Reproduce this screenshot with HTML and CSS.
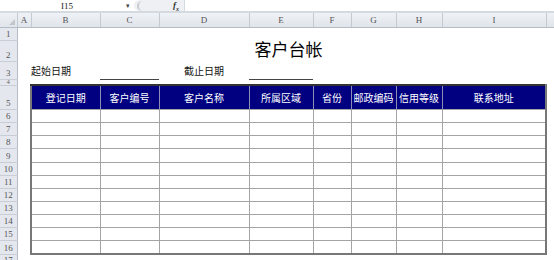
FILE: index.html
```html
<!DOCTYPE html>
<html lang="zh-CN">
<head>
    <meta charset="UTF-8">
    <title>客户台帐</title>
    <link rel="stylesheet" href="styles.css">
</head>
<body>
    <div class="formula-bar">
        <div class="name-box">
            <span class="cell-ref">I15</span>
            <span class="drop">&#9662;</span>
        </div>
        <div class="fx-zone">
            <span class="grip"></span>
            <span class="fx">f<sub>x</sub></span>
        </div>
        <div class="formula-input"></div>
    </div>

    <table class="sheet">
        <colgroup>
            <col style="width:17px"><col style="width:14px"><col style="width:69px">
            <col style="width:59px"><col style="width:90px"><col style="width:64px">
            <col style="width:38px"><col style="width:45px"><col style="width:46px">
            <col style="width:104px"><col style="width:8px">
        </colgroup>
        <tr class="col-head">
            <th class="corner"><span class="tri"></span></th>
            <th>A</th><th>B</th><th>C</th><th>D</th><th>E</th>
            <th>F</th><th>G</th><th>H</th><th>I</th><th></th>
        </tr>
        <tr class="r1"><th class="rh">1</th><td colspan="10"></td></tr>
        <tr class="r2">
            <th class="rh">2</th><td></td>
            <td colspan="8" class="title">客户台帐</td><td></td>
        </tr>
        <tr class="r3">
            <th class="rh">3</th><td></td>
            <td class="label">起始日期</td>
            <td class="blank"></td>
            <td class="label center">截止日期</td>
            <td class="blank"></td>
            <td colspan="5"></td>
        </tr>
        <tr class="r4"><th class="rh">4</th><td colspan="10"></td></tr>
        <tr class="r5">
            <th class="rh">5</th><td></td>
            <td class="hd first">登记日期</td>
            <td class="hd">客户编号</td>
            <td class="hd">客户名称</td>
            <td class="hd">所属区域</td>
            <td class="hd">省份</td>
            <td class="hd">邮政编码</td>
            <td class="hd">信用等级</td>
            <td class="hd last">联系地址</td>
            <td></td>
        </tr>
        <tr class="row"><th class="rh">6</th><td></td><td class="c first"></td><td class="c"></td><td class="c"></td><td class="c"></td><td class="c"></td><td class="c"></td><td class="c"></td><td class="c last"></td><td></td></tr>
        <tr class="row"><th class="rh">7</th><td></td><td class="c first"></td><td class="c"></td><td class="c"></td><td class="c"></td><td class="c"></td><td class="c"></td><td class="c"></td><td class="c last"></td><td></td></tr>
        <tr class="row"><th class="rh">8</th><td></td><td class="c first"></td><td class="c"></td><td class="c"></td><td class="c"></td><td class="c"></td><td class="c"></td><td class="c"></td><td class="c last"></td><td></td></tr>
        <tr class="row tall"><th class="rh">9</th><td></td><td class="c first"></td><td class="c"></td><td class="c"></td><td class="c"></td><td class="c"></td><td class="c"></td><td class="c"></td><td class="c last"></td><td></td></tr>
        <tr class="row"><th class="rh">10</th><td></td><td class="c first"></td><td class="c"></td><td class="c"></td><td class="c"></td><td class="c"></td><td class="c"></td><td class="c"></td><td class="c last"></td><td></td></tr>
        <tr class="row"><th class="rh">11</th><td></td><td class="c first"></td><td class="c"></td><td class="c"></td><td class="c"></td><td class="c"></td><td class="c"></td><td class="c"></td><td class="c last"></td><td></td></tr>
        <tr class="row"><th class="rh">12</th><td></td><td class="c first"></td><td class="c"></td><td class="c"></td><td class="c"></td><td class="c"></td><td class="c"></td><td class="c"></td><td class="c last"></td><td></td></tr>
        <tr class="row"><th class="rh">13</th><td></td><td class="c first"></td><td class="c"></td><td class="c"></td><td class="c"></td><td class="c"></td><td class="c"></td><td class="c"></td><td class="c last"></td><td></td></tr>
        <tr class="row"><th class="rh">14</th><td></td><td class="c first"></td><td class="c"></td><td class="c"></td><td class="c"></td><td class="c"></td><td class="c"></td><td class="c"></td><td class="c last"></td><td></td></tr>
        <tr class="row"><th class="rh">15</th><td></td><td class="c first"></td><td class="c"></td><td class="c"></td><td class="c"></td><td class="c"></td><td class="c"></td><td class="c"></td><td class="c last"></td><td></td></tr>
        <tr class="row tall bottom"><th class="rh">16</th><td></td><td class="c first"></td><td class="c"></td><td class="c"></td><td class="c"></td><td class="c"></td><td class="c"></td><td class="c"></td><td class="c last"></td><td></td></tr>
        <tr class="r17"><th class="rh">17</th><td colspan="10"></td></tr>
    </table>
</body>
</html>
```

FILE: styles.css
```css
* {
    margin: 0;
    padding: 0;
    box-sizing: border-box;
}

body {
    width: 554px;
    height: 260px;
    overflow: hidden;
    background-color: #fff;
    font-family: "Liberation Sans", "Noto Sans CJK SC", sans-serif;
}

/* formula bar */
.formula-bar {
    display: flex;
    height: 13px;
    border-bottom: 2px solid #d5dae0;
    background-color: #fff;
}

.name-box {
    width: 134px;
    display: flex;
    align-items: center;
}

.cell-ref {
    flex: 1;
    text-align: center;
    font-family: "Liberation Serif", serif;
    font-size: 9px;
    color: #222;
    padding-left: 8px;
}

.drop {
    font-size: 7px;
    color: #444;
    margin-right: 4px;
}

.fx-zone {
    width: 50px;
    display: flex;
    align-items: center;
    background-color: #eef0f3;
    border-radius: 6px 0 0 6px;
}

.grip {
    width: 8px;
    height: 10px;
    margin-left: 3px;
    border-left: 2px solid #c8ccd2;
    border-radius: 6px 0 0 6px;
}

.fx {
    margin-left: 28px;
    font-family: "Liberation Serif", serif;
    font-style: italic;
    font-weight: bold;
    font-size: 9px;
    color: #333;
}

.fx sub {
    font-size: 6px;
}

.formula-input {
    flex: 1;
    border-left: 1px solid #d5dae0;
    background-color: #fff;
}

/* sheet grid */
.sheet {
    table-layout: fixed;
    border-collapse: collapse;
    width: 554px;
}

.sheet td,
.sheet th {
    padding: 0;
    white-space: nowrap;
}

.col-head th {
    height: 14px;
    background: linear-gradient(#eef1f5, #e0e5eb);
    border-right: 1px solid #c4cad2;
    border-bottom: 1px solid #b4bcc6;
    font-family: "Liberation Serif", serif;
    font-weight: normal;
    font-size: 9px;
    color: #555;
    text-align: center;
}

.corner {
    position: relative;
}

.tri {
    position: absolute;
    right: 2px;
    bottom: 2px;
    width: 0;
    height: 0;
    border-left: 6px solid transparent;
    border-bottom: 6px solid #c2c7ce;
}

.rh {
    background: #e4e8ee;
    border-right: 1px solid #b4bcc6;
    border-bottom: 1px solid #c9ced6;
    font-family: "Liberation Serif", serif;
    font-weight: normal;
    font-size: 9px;
    color: #555;
    text-align: center;
    vertical-align: bottom;
    line-height: 11px;
}

.r1 { height: 13px; }
.r2 { height: 21px; }
.r3 { height: 18px; }
.r4 { height: 5px; }
.r5 { height: 24px; }
.row { height: 13px; }
.row.tall { height: 14px; }
.r17 { height: 10px; }

.r4 .rh {
    font-size: 6px;
    line-height: 5px;
}

.title {
    text-align: center;
    vertical-align: bottom;
    font-size: 17px;
    color: #000;
    line-height: 20px;
}

.label {
    font-size: 10px;
    color: #111;
    padding-left: 2px;
    vertical-align: middle;
}

.label.center {
    text-align: center;
    padding-left: 0;
}

.blank {
    border-bottom: 1px solid #444;
}

/* ledger table */
.hd {
    background-color: #000080;
    color: #fff;
    font-size: 10px;
    text-align: center;
    border-top: 2px solid #333;
    border-left: 1px solid #8c8cb4;
    border-right: 1px solid #8c8cb4;
}

.c {
    border: 1px solid #a4a4a4;
}

.first {
    border-left: 2px solid #777;
}

.last {
    border-right: 2px solid #777;
}

.bottom .c {
    border-bottom: 2px solid #777;
}
```
